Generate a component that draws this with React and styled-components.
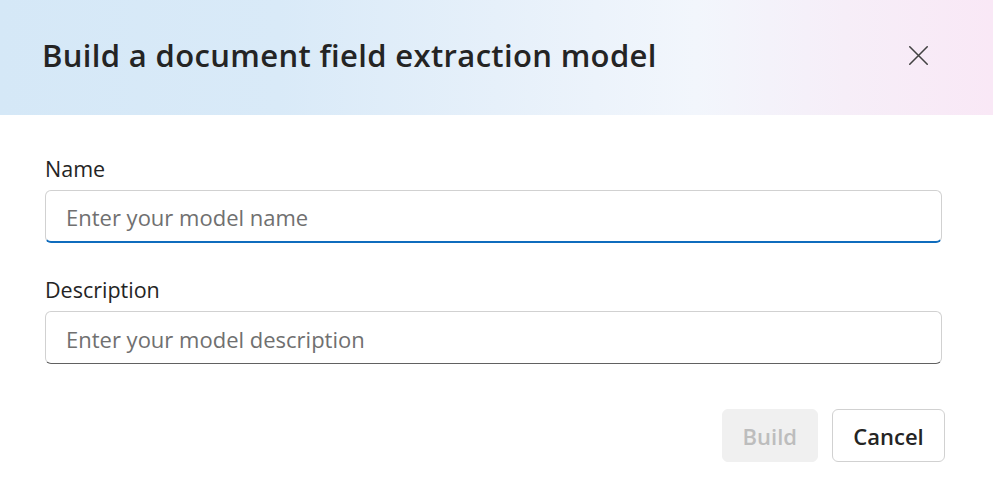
import { useState } from "react";
import styled, { createGlobalStyle } from "styled-components";

const GlobalStyle = createGlobalStyle`
  html, body {
    margin: 0;
    padding: 0;
    background: #ffffff;
  }
  body {
    font-family: "Open Sans", "Noto Sans", "Liberation Sans", sans-serif;
    color: #242424;
  }
`;

const Dialog = styled.div`
  width: 993px;
  height: 490px;
  background: #ffffff;
  display: flex;
  flex-direction: column;
  overflow: hidden;
`;

const Header = styled.header`
  height: 115px;
  box-sizing: border-box;
  padding: 0 59px 5px 42px;
  display: flex;
  align-items: center;
  justify-content: space-between;
  background: linear-gradient(
    90deg,
    #d5e8f7 0%,
    #d9eaf8 28%,
    #e6f0fa 50%,
    #f2f6fc 70%,
    #f6eef8 85%,
    #f9e8f6 100%
  );
`;

const Title = styled.h1`
  margin: 0;
  font-size: 31px;
  font-weight: 600;
  color: #242424;
  letter-spacing: 0.35px;
`;

const CloseButton = styled.button`
  width: 32px;
  height: 32px;
  border: none;
  background: transparent;
  padding: 0;
  display: flex;
  align-items: center;
  justify-content: center;
  cursor: pointer;
  color: #424242;
`;

const Body = styled.div`
  padding: 40px 51px 0 45px;
  display: flex;
  flex-direction: column;
`;

const Field = styled.div`
  display: flex;
  flex-direction: column;
  gap: 8px;
  margin-bottom: ${(p) => p.$space || 0}px;
`;

const Label = styled.label`
  font-size: 21.5px;
  line-height: 27px;
  color: #242424;
`;

const Input = styled.input`
  box-sizing: border-box;
  width: 100%;
  height: 53px;
  border: 1px solid #d1d1d1;
  border-bottom: ${(p) => (p.$active ? "2px solid #0f6cbd" : "1px solid #616161")};
  border-radius: 6px;
  padding: 2px 20px 0;
  font-family: inherit;
  font-size: 22px;
  color: #242424;
  outline: none;
  background: #ffffff;
  caret-color: #242424;

  &::placeholder {
    color: #707070;
  }
`;

const Footer = styled.div`
  display: flex;
  justify-content: flex-end;
  gap: 14px;
  padding: 45px 48px 0 0;
`;

const Button = styled.button`
  box-sizing: border-box;
  height: 53px;
  min-width: ${(p) => p.$width}px;
  border-radius: 6px;
  font-family: inherit;
  font-size: 22px;
  font-weight: 600;
  padding: 0 20px;
  border: 1px solid ${(p) => (p.$disabled ? "#f0f0f0" : "#d1d1d1")};
  background: ${(p) => (p.$disabled ? "#f0f0f0" : "#ffffff")};
  color: ${(p) => (p.$disabled ? "#bdbdbd" : "#242424")};
  cursor: ${(p) => (p.$disabled ? "default" : "pointer")};
`;

const App = () => {
  const [name, setName] = useState("");
  const [description, setDescription] = useState("");

  return (
    <>
      <GlobalStyle />
      <Dialog>
        <Header>
          <Title>Build a document field extraction model</Title>
          <CloseButton aria-label="Close">
            <svg width="21" height="21" viewBox="0 0 24 24" fill="none">
              <path
                d="M2 2L22 22M22 2L2 22"
                stroke="currentColor"
                strokeWidth="1.8"
                strokeLinecap="round"
              />
            </svg>
          </CloseButton>
        </Header>
        <Body>
          <Field $space={33}>
            <Label htmlFor="name">Name</Label>
            <Input
              id="name"
              $active
              autoFocus
              placeholder="Enter your model name"
              value={name}
              onChange={(e) => setName(e.target.value)}
            />
          </Field>
          <Field>
            <Label htmlFor="desc">Description</Label>
            <Input
              id="desc"
              placeholder="Enter your model description"
              value={description}
              onChange={(e) => setDescription(e.target.value)}
            />
          </Field>
        </Body>
        <Footer>
          <Button $disabled $width={96} disabled>
            Build
          </Button>
          <Button $width={113}>Cancel</Button>
        </Footer>
      </Dialog>
    </>
  );
};

export default App;
